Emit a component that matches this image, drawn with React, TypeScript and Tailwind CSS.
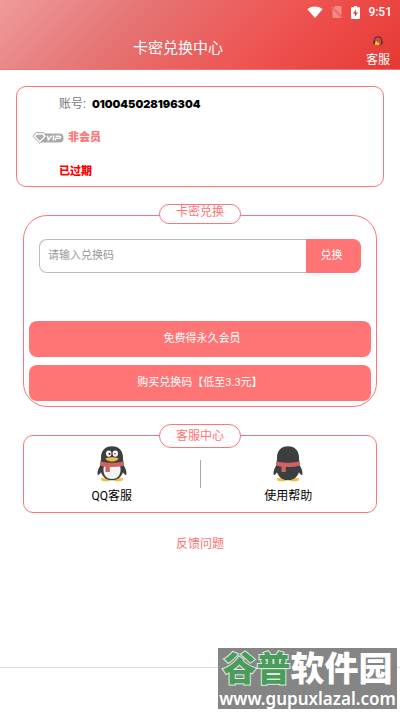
import React from "react";

interface IPenguin {
  back?: boolean;
}

const WifiIcon = () => (
  <svg className="h-3 w-4" viewBox="0 0 16 12" fill="#fff">
    <path d="M0.4 3.2C2.4 1.4 5 .4 8 .4s5.600 1 7.600 2.800L8 12z" />
  </svg>
);

const NoSimIcon = () => (
  <svg className="h-3 w-3" viewBox="0 0 12 12">
    <path d="M4 0h5.500q1 0 1 1v8.500L2.600 1.500zM1.500 3l8.500 9H2.500q-1 0-1-1z" fill="#fff" opacity=".35" />
    <path d="M.8 1l10.400 10.600" stroke="#fff" strokeWidth="1" opacity=".4" />
  </svg>
);

const BatteryIcon = () => (
  <svg className="h-[13px] w-[9px]" viewBox="0 0 9 13">
    <path d="M3 0h3v1.300h2q1 0 1 1V12q0 1-1 1H1q-1 0-1-1V2.300q0-1 1-1h2z" fill="#fff" />
    <path d="M5.200 3.200L2 7.600h2.100L3.700 11 7 6.500H4.800z" fill="#e53935" />
  </svg>
);

const HeadsetIcon = () => (
  <svg className="h-[10px] w-[10px]" viewBox="0 0 10 10">
    <path d="M1.300 7V4.600C1.300 2.300 2.900.9 5 .9s3.700 1.400 3.700 3.700V7" fill="none" stroke="#4a3a38" strokeWidth="1.200" />
    <rect x=".3" y="4.800" width="1.600" height="3.800" rx=".8" fill="#4a3a38" />
    <rect x="8.100" y="4.800" width="1.600" height="3.800" rx=".8" fill="#4a3a38" />
    <path d="M2 9q0-3 1.300-4l1.400 1.300 1.600.9V9z" fill="#f5cf1b" />
    <path d="M8.600 8.200q-.6.900-1.800 1" fill="none" stroke="#4a3a38" strokeWidth=".8" />
  </svg>
);

const VipIcon = () => (
  <svg className="h-3 w-8" viewBox="0 0 32 12">
    <path d="M10 1.500h17.500a4 4 0 0 1 4 4v1a4 4 0 0 1-4 4H8z" fill="#a9a9a9" />
    <path d="M4 .7h7.600L14.500 4.200 7.800 11.200.9 4.300z" fill="#fff" stroke="#a5a5a5" strokeWidth="1" strokeLinejoin="round" />
    <path d="M5 2.800h5.600L12 4.400 7.800 8.800 3.500 4.400z" fill="#adadad" />
    <path
      d="M15.500 3.700l.8 4.200 3.400-4.200M21.800 3.400l-.8 5M23 8.500l.5-2.100h3.700q1 0 1.200-1.100.2-1.100-1-1.100h-3.700"
      fill="none"
      stroke="#fff"
      strokeWidth="1.400"
    />
  </svg>
);

const Penguin = ({ back }: IPenguin) => (
  <svg className="h-9 w-[30px]" viewBox="0 0 30 36">
    <ellipse cx="9" cy="33.500" rx="5" ry="1.900" fill="#efc247" />
    <ellipse cx="21" cy="33.500" rx="5" ry="1.900" fill="#efc247" />
    <path d="M5 17C1.800 21 0 25 .6 28.500c.4 1 2 .2 3.600-2.500zM25 17c3.200 4 5 8 4.400 11.500-.4 1-2 .2-3.600-2.500z" fill="#3d3e40" />
    <path
      d="M15 .3C8 .3 4 5 4 11.500c0 3-.5 5-.7 9C2.900 28.500 7.500 34.200 15 34.200s12.100-5.700 11.700-13.700c-.2-4-.7-6-.7-9C26 5 22 .3 15 .3z"
      fill="#3d3e40"
    />
    {!back && (
      <>
        <path d="M7.200 18.500h15.600c2.400 8.500-1 14.500-7.800 14.500S4.800 27 7.200 18.500z" fill="#f4f4f4" />
        <ellipse cx="11.700" cy="7.600" rx="2.700" ry="3.100" fill="#fff" />
        <ellipse cx="18.300" cy="7.600" rx="2.700" ry="3.100" fill="#fff" />
        <circle cx="12.500" cy="7.800" r="1.100" fill="#333" />
        <path d="M16.800 8.300q1.200-2 2.300 0" fill="none" stroke="#333" strokeWidth=".9" />
        <path d="M8.300 12.600q6.700-2.800 13.400 0-1.500 2.800-6.700 2.800t-6.700-2.800z" fill="#efc247" />
      </>
    )}
    <path d="M3.500 15.400q11.500 2.600 23 0l.6 4q-5 1.600-12.100 1.600T2.900 19.400z" fill="#cf6363" />
    <path d="M8.500 20h4.300v6H8.500z" fill="#cf6363" />
  </svg>
);

const Header = () => (
  <header className="flex h-[70px] flex-col border-b border-[#f07472] bg-[linear-gradient(135deg,#ef9a9a,#e57373,#ef5350,#e53935)] text-white">
    <div className="flex h-6 items-center justify-end gap-2 pr-2">
      <WifiIcon />
      <NoSimIcon />
      <BatteryIcon />
      <span className="font-[Roboto] text-xs font-medium">9:51</span>
    </div>
    <div className="grid flex-1 grid-cols-[1fr_44px] items-center">
      <h1 className="pt-1 text-center text-[15px]">卡密兑换中心</h1>
      <button type="button" className="flex flex-col items-center gap-1.5 pt-2.5 text-xs">
        <HeadsetIcon />
        客服
      </button>
    </div>
  </header>
);

const Account = () => (
  <section className="mx-4 mt-4 flex h-[101px] flex-col gap-4 rounded-[10px] border border-[#ff7474] pt-2 pl-[15px]">
    <p className="flex h-[18px] items-center gap-1.5 pl-[27px] text-xs text-[#777]">
      账号:
      <span className="font-[Inter] text-[11px] font-black text-black">010045028196304</span>
    </p>
    <p className="flex h-[18px] items-center gap-1 text-[11px] font-black text-[#ff7474]">
      <VipIcon />
      非会员
    </p>
    <p className="flex h-[18px] items-center pl-[27px] text-[11px] font-black text-[#ff0000]">已过期</p>
  </section>
);

const Redeem = () => (
  <section className="relative mx-[23px] mt-7 rounded-3xl border border-[#ff7474] px-[5px] pt-[23px] pb-[5px]">
    <h2 className="absolute -top-3 left-1/2 flex h-5 w-[82px] -translate-x-1/2 items-center justify-center rounded-full border border-[#ff7474] bg-white pb-1 text-xs text-[#ff7474]">
      卡密兑换
    </h2>
    <form className="mx-[10px] flex h-[34px]" onSubmit={(e) => e.preventDefault()}>
      <input
        type="text"
        aria-label="兑换码"
        placeholder="请输入兑换码"
        className="min-w-0 flex-1 rounded-l-lg border border-r-0 border-[#bbb] px-2 text-[11px] placeholder:text-[#999]"
      />
      <button type="submit" className="w-[55px] rounded-r-lg bg-[#ff7474] pr-1 text-[11px] text-white">
        兑换
      </button>
    </form>
    <div className="mt-12 flex flex-col gap-2 text-[11px] text-white">
      <button type="button" className="h-9 rounded-lg bg-[#ff7474] pl-1">
        免费得永久会员
      </button>
      <button type="button" className="h-9 rounded-lg bg-[#ff7474]">
        购买兑换码【低至3.3元】
      </button>
    </div>
  </section>
);

const Service = () => (
  <section className="relative mx-[23px] mt-7 flex h-[78px] items-center rounded-[10px] border border-[#ff7474] text-xs text-black">
    <h2 className="absolute -top-3 left-1/2 flex h-6 w-[82px] -translate-x-1/2 items-center justify-center rounded-full border border-[#ff7474] bg-white text-[#ff7474]">
      客服中心
    </h2>
    <button type="button" className="flex flex-1 flex-col items-center gap-1.5 pt-0.5">
      <Penguin />
      QQ客服
    </button>
    <div className="h-7 w-px bg-[#aaa]" />
    <button type="button" className="flex flex-1 flex-col items-center gap-1.5 pt-0.5">
      <Penguin back />
      使用帮助
    </button>
  </section>
);

const Watermark = () => (
  <div className="absolute right-[3px] bottom-[3px] flex h-[61px] w-[179px] flex-col items-center justify-end overflow-hidden bg-[#858585] whitespace-nowrap text-white">
    <p className="text-[34px] leading-10 font-black">
      <span className="text-[#4a9c5b] [-webkit-text-stroke:2px_#dfeadf] [paint-order:stroke_fill]">谷普</span>
      软件园
    </p>
    <p className="font-['Noto_Sans'] text-[17px] leading-5 font-semibold">www.gupuxlazal.com</p>
  </div>
);

const App = () => {
  return (
    <div className="relative flex min-h-screen flex-col bg-white font-['Roboto','Noto_Sans_CJK_SC',sans-serif]">
      <Header />
      <main>
        <Account />
        <Redeem />
        <Service />
        <div className="mt-[23px] flex justify-center">
          <a href="#feedback" className="text-xs text-[#ff7474]">
            反馈问题
          </a>
        </div>
      </main>
      <footer className="mt-auto h-[45px] border-t border-[#e3dada]" />
      <Watermark />
    </div>
  );
};

export default App;
